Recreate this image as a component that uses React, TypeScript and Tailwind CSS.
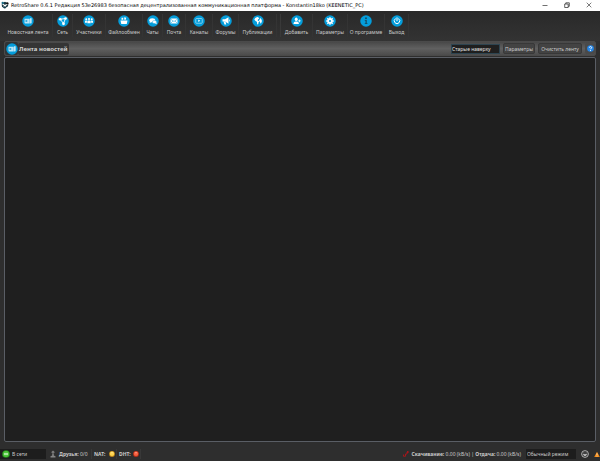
import { useState } from 'react';
import type { ReactNode } from 'react';

interface ToolItem {
  id: string;
  label: string;
  width: string;
  icon: ReactNode;
}

const Disc = ({ children, className = 'w-3 h-3' }: { children: ReactNode; className?: string }) => (
  <svg viewBox="0 0 24 24" className={className} aria-hidden="true">
    <circle cx="12" cy="12" r="11.5" fill="#049ddb" />
    {children}
  </svg>
);

const NewsGlyph = () => (
  <>
    <path d="M5 7.5h10.5v9.500H6.5A1.5 1.5 0 0 1 5 15.5z" fill="#b9e5f7" />
    <path d="M7 10h3.500v4H7z" fill="#3aaede" />
    <path d="M16.5 6.5h2.5v9a1.5 1.5 0 0 1-2.5 1z" fill="#fff" />
  </>
);

const mainTools: ToolItem[] = [
  { id: 'news', label: 'Новостная лента', width: 'w-[49px]', icon: <NewsGlyph /> },
  {
    id: 'network',
    label: 'Сеть',
    width: 'w-5',
    icon: (
      <>
        <path d="M6.5 8.5 17 7l-4 10z" fill="none" stroke="#fff" strokeWidth="1.8" />
        <circle cx="6.5" cy="8.5" r="2.7" fill="#fff" />
        <circle cx="17" cy="7" r="2.7" fill="#fff" />
        <circle cx="13" cy="17.5" r="2.8" fill="#fff" />
      </>
    ),
  },
  {
    id: 'people',
    label: 'Участники',
    width: 'w-[33px]',
    icon: (
      <g fill="#fff">
        <circle cx="6.5" cy="8.500" r="2" />
        <circle cx="12" cy="8" r="2.200" />
        <circle cx="17.5" cy="8.500" r="2" />
        <path d="M4 15.500v-2.500a2 2 0 0 1 2-2h1.200l.6.5v4zM20 15.500v-2.500a2 2 0 0 0-2-2h-1.200l-.6.5v4z" />
        <path d="M8.700 16.500v-3.500a2 2 0 0 1 2-2h2.600a2 2 0 0 1 2 2v3.500z" />
      </g>
    ),
  },
  {
    id: 'files',
    label: 'Файлообмен',
    width: 'w-[37px]',
    icon: (
      <g fill="#fff">
        <path d="M5 11h14l-1.500 7h-11z" />
        <path d="M7 5.500h3.500v4H7zM12.500 4.500 16.500 5.500 15.500 9.500h-3z" />
      </g>
    ),
  },
  {
    id: 'chats',
    label: 'Чаты',
    width: 'w-5',
    icon: (
      <>
        <ellipse cx="10.500" cy="10.500" rx="6" ry="4" fill="#fff" />
        <path d="m6 12-.8 4 4-2z" fill="#fff" />
        <ellipse cx="15" cy="14" rx="4.500" ry="3" fill="#fff" stroke="#049ddb" strokeWidth=".8" />
        <path d="m16 16.500 3.500 1.800-.7-3.500z" fill="#fff" />
      </>
    ),
  },
  {
    id: 'mail',
    label: 'Почта',
    width: 'w-[23px]',
    icon: (
      <>
        <rect x="5" y="7" width="14" height="10" rx="1" fill="#fff" />
        <path d="m5 8 7 5 7-5M5.500 16.500l4.500-4.500M18.500 16.500 14 12" fill="none" stroke="#049ddb" strokeWidth="1" />
      </>
    ),
  },
  {
    id: 'channels',
    label: 'Каналы',
    width: 'w-[27px]',
    icon: (
      <>
        <rect x="5.500" y="7" width="13" height="9.500" rx="1.500" fill="none" stroke="#a5def4" strokeWidth="1.500" />
        <path d="m10.500 9 4 2.500-4 2.500z" fill="#fff" />
      </>
    ),
  },
  {
    id: 'forums',
    label: 'Форумы',
    width: 'w-[26px]',
    icon: (
      <g fill="#fff">
        <path d="M5 8.500h5l7-4v13l-7-4.500H5z" />
        <path d="M7 13h4l1.500 6H9zM18 8.500c2 .8 2 4.200 0 5z" />
      </g>
    ),
  },
  {
    id: 'posts',
    label: 'Публикации',
    width: 'w-[38px]',
    icon: (
      <g fill="#fff">
        <path d="M12 4.200c-3.500 0-6.300 2-7.300 5.500l3 3 2 .8.800 5.500 2-.8.500-3 1.500-2-3.500-2.500 1.500-2 2-1.500z" />
        <path d="M15.500 6 17.500 7l2 3 .2 3-1.700 4-1.500-.5-.5-3-2-1 .5-3 2-1z" />
      </g>
    ),
  },
];

const systemTools: ToolItem[] = [
  {
    id: 'add',
    label: 'Добавить',
    width: 'w-8',
    icon: (
      <g fill="#fff">
        <ellipse cx="10.500" cy="8.500" rx="2.900" ry="3.700" />
        <path d="M5 18c0-3 1.500-4.500 4-5h3c2.500.5 3.800 2 3.800 5zM16 9h1.500v2h2v1.500h-2v2H16v-2h-2V11h2z" />
      </g>
    ),
  },
  {
    id: 'options',
    label: 'Параметры',
    width: 'w-[35px]',
    icon: (
      <>
        <path d="M12 4.500v15M4.500 12h15M6.700 6.700l10.600 10.600M17.300 6.700 6.700 17.300" stroke="#fff" strokeWidth="2.800" />
        <circle cx="12" cy="12" r="5.300" fill="#fff" />
        <circle cx="12" cy="12" r="2.200" fill="#049ddb" />
      </>
    ),
  },
  {
    id: 'about',
    label: 'О программе',
    width: 'w-[37px]',
    icon: (
      <g fill="#174a60">
        <circle cx="12" cy="6.500" r="1.900" />
        <path d="M9.500 10h4v6.500H15V18H9.500v-1.500H11v-5H9.500z" />
      </g>
    ),
  },
  {
    id: 'quit',
    label: 'Выход',
    width: 'w-6',
    icon: (
      <path
        d="M12 5.500v6M8.500 7.500a5.500 5.500 0 1 0 7 0"
        fill="none"
        stroke="#fff"
        strokeWidth="2"
        strokeLinecap="round"
      />
    ),
  },
];

const ToolButton = ({ item }: { item: ToolItem }) => (
  <button
    type="button"
    className={`${item.width} flex shrink-0 flex-col items-center justify-center border-r border-[#343434] whitespace-nowrap`}
  >
    <Disc>{item.icon}</Disc>
    <span className="text-[5px] leading-[10px]">{item.label}</span>
  </button>
);

const TitleBar = () => (
  <header className="flex h-[11px] shrink-0 items-center bg-white pb-px pl-px text-black">
    <svg viewBox="0 0 24 24" className="mr-0.5 h-2 w-2" aria-hidden="true">
      <path d="M4 6l8-4 7 4-7 6zM2 9l6 4v8l-5-4zM22 9l-7 5-3 8 9-6z" fill="#17353f" />
      <circle cx="5" cy="6" r="3.500" fill="#1e6f88" />
      <circle cx="19" cy="7" r="3.500" fill="#111" />
      <circle cx="11" cy="19" r="3.500" fill="#173f4e" />
    </svg>
    <h1 className="font-['DejaVu_Sans',sans-serif] text-[5px] leading-[10px] whitespace-nowrap">
      RetroShare 0.6.1 Редакция 53e26983 безопасная децентрализованная коммуникационная платформа - Konstantin18ko (KEENETIC_PC)
    </h1>
    <div className="ml-auto flex items-center gap-4 pr-2">
      <button type="button" aria-label="Свернуть">
        <svg viewBox="0 0 6 6" className="h-1.5 w-1.5">
          <path d="M.5 3.500h5" stroke="#333" strokeWidth=".7" />
        </svg>
      </button>
      <button type="button" aria-label="Восстановить">
        <svg viewBox="0 0 6 6" className="h-1.5 w-1.5" fill="none" stroke="#222" strokeWidth=".7">
          <path d="M.7 2h3.500v3.500H.7zM1.800 2V.8h3.500v3.500H4.200" />
        </svg>
      </button>
      <button type="button" aria-label="Закрыть">
        <svg viewBox="0 0 6 6" className="h-1.5 w-1.5">
          <path d="m.7.7 4.600 4.600M5.300.7.7 5.300" stroke="#222" strokeWidth=".6" />
        </svg>
      </button>
    </div>
  </header>
);

const FeedHeader = () => {
  const [order, setOrder] = useState('old');

  return (
    <div className="mx-1 flex h-[15px] shrink-0 items-center rounded-xs border border-[#4a4a4a] bg-linear-to-b from-[#484848] via-[#606060] to-[#4c4c4c]">
      <span className="flex h-[13px] w-[13px] shrink-0 items-center justify-center rounded-xs bg-[#2f3437]">
        <Disc>
          <NewsGlyph />
        </Disc>
      </span>
      <h2 className="rounded-xs bg-[#353535] px-px text-[6px] leading-[12px] font-bold whitespace-nowrap text-[#d2d2d2]">
        Лента новостей
      </h2>
      <div className="ml-auto flex items-center gap-[3px]">
        <select
          aria-label="Порядок"
          value={order}
          onChange={(e) => setOrder(e.target.value)}
          className="h-2.5 w-[49px] appearance-none border border-[#2d4450] bg-[#1f1f1f] text-[5px] leading-[8px] text-[#e0e0e0]"
        >
          <option value="old">Старые наверху</option>
          <option value="new">Новые наверху</option>
        </select>
        <button type="button" className="h-[11px] w-8 rounded-xs border border-[#383838] bg-[#434343] text-[5px] leading-[8px] whitespace-nowrap">
          Параметры
        </button>
        <button type="button" className="h-[11px] w-11 rounded-xs border border-[#383838] bg-[#434343] text-[5px] leading-[8px] whitespace-nowrap">
          Очистить ленту
        </button>
        <button type="button" aria-label="Справка" className="flex h-[11px] w-2.5 items-center justify-center rounded-xs bg-[#4a4a4a]">
          <svg viewBox="0 0 12 12" className="h-[7px] w-[7px]">
            <circle cx="6" cy="6" r="5.700" fill="#2386e8" />
            <path d="M4 4.500C4 2.200 8 2.200 8 4.500 8 6 6 5.800 6 7.300M6 8.500v1.500" fill="none" stroke="#fff" strokeWidth="1.700" />
          </svg>
        </button>
      </div>
    </div>
  );
};

const Led = ({ light, dark }: { light: string; dark: string }) => (
  <svg viewBox="0 0 12 12" className="h-1.5 w-1.5 shrink-0" aria-hidden="true">
    <circle cx="6" cy="6" r="5.800" fill={dark} />
    <circle cx="6" cy="5.500" r="4.500" fill={light} />
    <ellipse cx="6" cy="3.500" rx="2" ry="1" fill="#fff" opacity=".5" />
  </svg>
);

const StatusBar = () => {
  const [status, setStatus] = useState('online');
  const [mode, setMode] = useState('normal');

  return (
    <footer className="flex h-[14px] shrink-0 items-center text-[5px] leading-[10px] whitespace-nowrap">
      <div className="flex h-2.5 w-[46px] items-center gap-0.5 bg-[#1d1d1d] pl-0.5">
        <svg viewBox="0 0 12 12" className="h-2 w-2 shrink-0" aria-hidden="true">
          <circle cx="6" cy="6" r="5.800" fill="#258b1c" />
          <circle cx="6" cy="6" r="4.400" fill="#4fc73c" />
          <path d="M3 5h6v2H3z" fill="#d5f5ce" />
        </svg>
        <select
          aria-label="Статус"
          value={status}
          onChange={(e) => setStatus(e.target.value)}
          className="h-2 w-8 appearance-none text-[5px] leading-[8px]"
        >
          <option value="online">В сети</option>
          <option value="away">Отошёл</option>
        </select>
      </div>
      <div className="ml-1 flex w-[42px] items-center gap-[3px] border-r border-[#383838]">
        <svg viewBox="0 0 12 16" className="h-2 w-1.5 shrink-0" aria-hidden="true">
          <circle cx="6" cy="4.500" r="2.800" fill="#777" />
          <path d="M4.500 7.500h3V11l3.500 1.500V15H1v-2.500L4.500 11z" fill="#858585" />
        </svg>
        <span>
          <b>Друзья:</b> 0/0
        </span>
      </div>
      <div className="flex w-[25px] items-center justify-between border-r border-[#383838] pr-px pl-0.5">
        <b>NAT:</b>
        <Led light="#ffd44d" dark="#bd861a" />
      </div>
      <div className="flex w-6 items-center justify-between border-r border-[#383838] pr-px pl-0.5">
        <b>DHT:</b>
        <Led light="#f5603f" dark="#b52b16" />
      </div>
      <div className="ml-auto flex items-center gap-[5px]">
        <div className="flex items-center gap-[3px]">
          <svg viewBox="0 0 12 12" className="h-1.5 w-1.5" aria-hidden="true">
            <path d="M1 10.500h4V6h3V2h3M8 .5 11 2 8 4M1 7v3.500" fill="none" stroke="#b51419" strokeWidth="1.700" />
          </svg>
          <span>
            <b>Скачивание:</b> 0.00 (kB/s) | <b>Отдача:</b> 0.00 (kB/s)
          </span>
        </div>
        <select
          aria-label="Режим"
          value={mode}
          onChange={(e) => setMode(e.target.value)}
          className="h-2.5 w-[50px] appearance-none bg-[#1d1d1d] pl-px text-[5px] leading-[8px]"
        >
          <option value="normal">Обычный режим</option>
          <option value="quiet">Тихий режим</option>
        </select>
        <button type="button" aria-label="Звук">
          <svg viewBox="0 0 16 16" className="h-2 w-2">
            <circle cx="8" cy="8" r="6.800" fill="#333" stroke="#c5c5c5" strokeWidth="1.700" />
            <path d="M5 6h1.500M9.500 6H11M4.500 9c1 3 6 3 7 0z" fill="#c5c5c5" stroke="#c5c5c5" strokeWidth="1.500" />
          </svg>
        </button>
        <svg viewBox="0 0 14 14" className="h-[7px] w-1.5" role="img" aria-label="Предупреждение">
          <path d="M7 .5 13.500 13H.5z" fill="#f28c18" />
          <path d="M7 4.500V9M7 10.200v1.500" stroke="#fff" strokeWidth="1.500" />
        </svg>
      </div>
    </footer>
  );
};

export default function App() {
  return (
    <div className="flex h-screen flex-col overflow-hidden bg-[#2e2e2e] font-['Noto_Sans','Open_Sans',sans-serif] text-[#cacaca]">
      <TitleBar />
      <nav className="flex h-[30px] shrink-0 bg-linear-to-b from-[#292929] to-[#333] pt-[3px] pb-1 pl-1">
        {mainTools.map((item) => (
          <ToolButton key={item.id} item={item} />
        ))}
        <div className="w-1 shrink-0 border-r border-[#393939]" />
        {systemTools.map((item) => (
          <ToolButton key={item.id} item={item} />
        ))}
      </nav>
      <FeedHeader />
      <main className="mx-1 mt-px mb-[5px] flex-1 rounded-xs border border-[#5a5e65] bg-[#1f1f1f]" />
      <StatusBar />
    </div>
  );
}
